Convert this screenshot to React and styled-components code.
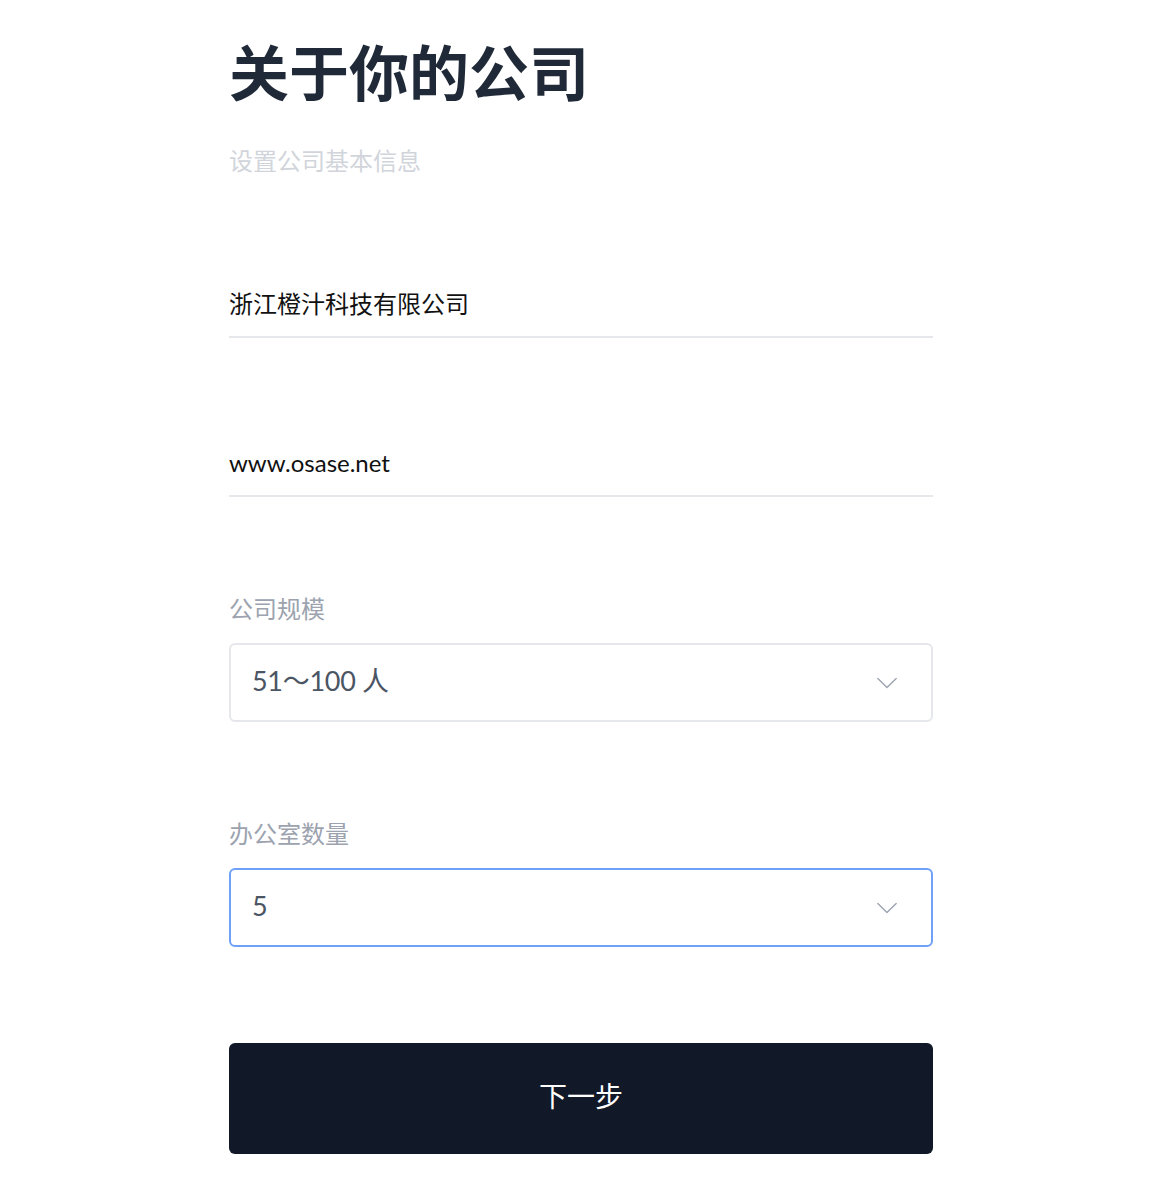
import styled, { createGlobalStyle } from 'styled-components';

const GlobalStyle = createGlobalStyle`
    body {
        margin: 0;
        background: #fff;
        font-family: Lato, 'Noto Sans CJK SC', sans-serif;
    }
`;

const Chevron = () => (
    <svg width='22' height='22' viewBox='0 0 24 24' fill='none' stroke='#9ca3af' strokeWidth='1.5' strokeLinecap='round' strokeLinejoin='round'>
        <path d='M2 7l10 10 10-10' />
    </svg>
);

const App = () => {
    return (
        <Page>
            <GlobalStyle />
            <Title>关于你的公司</Title>
            <Subtitle>设置公司基本信息</Subtitle>

            <Form>
                <TextField>浙江橙汁科技有限公司</TextField>
                <TextField>www.osase.net</TextField>

                <Group>
                    <Label>公司规模</Label>
                    <Select>
                        <SelectValue>51～100 人</SelectValue>
                        <Chevron />
                    </Select>
                </Group>

                <Group>
                    <Label>办公室数量</Label>
                    <Select $focused>
                        <SelectValue>5</SelectValue>
                        <Chevron />
                    </Select>
                </Group>
            </Form>

            <Button>下一步</Button>
        </Page>
    );
};

const Page = styled.div`
    width: 704px;
    margin-left: 229px;
    padding-top: 37px;
    padding-bottom: 44px;
`;

const Title = styled.h1`
    margin: 0;
    font-size: 60px;
    line-height: 66px;
    font-weight: 700;
    color: #1f2937;
    font-family: 'Noto Sans CJK SC', sans-serif;
`;

const Subtitle = styled.p`
    margin: 43px 0 0;
    font-size: 24px;
    line-height: 30px;
    color: #d1d5db;
`;

const Form = styled.div`
    display: flex;
    flex-direction: column;
    margin-top: 112px;
`;

const TextField = styled.div`
    font-size: 24px;
    line-height: 32px;
    color: #111;
    padding-bottom: 16px;
    border-bottom: 2px solid #e5e7eb;

    & + & {
        margin-top: 109px;
    }
`;

const Group = styled.div`
    display: flex;
    flex-direction: column;
    gap: 18px;
    margin-top: 96px;
`;

const Label = styled.div`
    font-size: 24px;
    line-height: 32px;
    color: #9ca3af;
`;

const Select = styled.div`
    height: 79px;
    box-sizing: border-box;
    display: flex;
    align-items: center;
    justify-content: space-between;
    padding: 0 33px 0 21px;
    border: 2px solid ${(p) => (p.$focused ? '#6ea1f7' : '#e5e7eb')};
    border-radius: 6px;

    > svg {
        flex: none;
    }
`;

const SelectValue = styled.span`
    font-size: 27px;
    line-height: 32px;
    padding-bottom: 4px;
    color: #4b5563;
    letter-spacing: -0.3px;
`;

const Button = styled.button`
    display: block;
    width: 100%;
    height: 111px;
    margin-top: 96px;
    padding: 0 0 7px;
    border: none;
    border-radius: 6px;
    background: #111827;
    color: #fff;
    font-size: 28px;
    font-family: 'Noto Sans CJK SC', sans-serif;
`;

export default App;
